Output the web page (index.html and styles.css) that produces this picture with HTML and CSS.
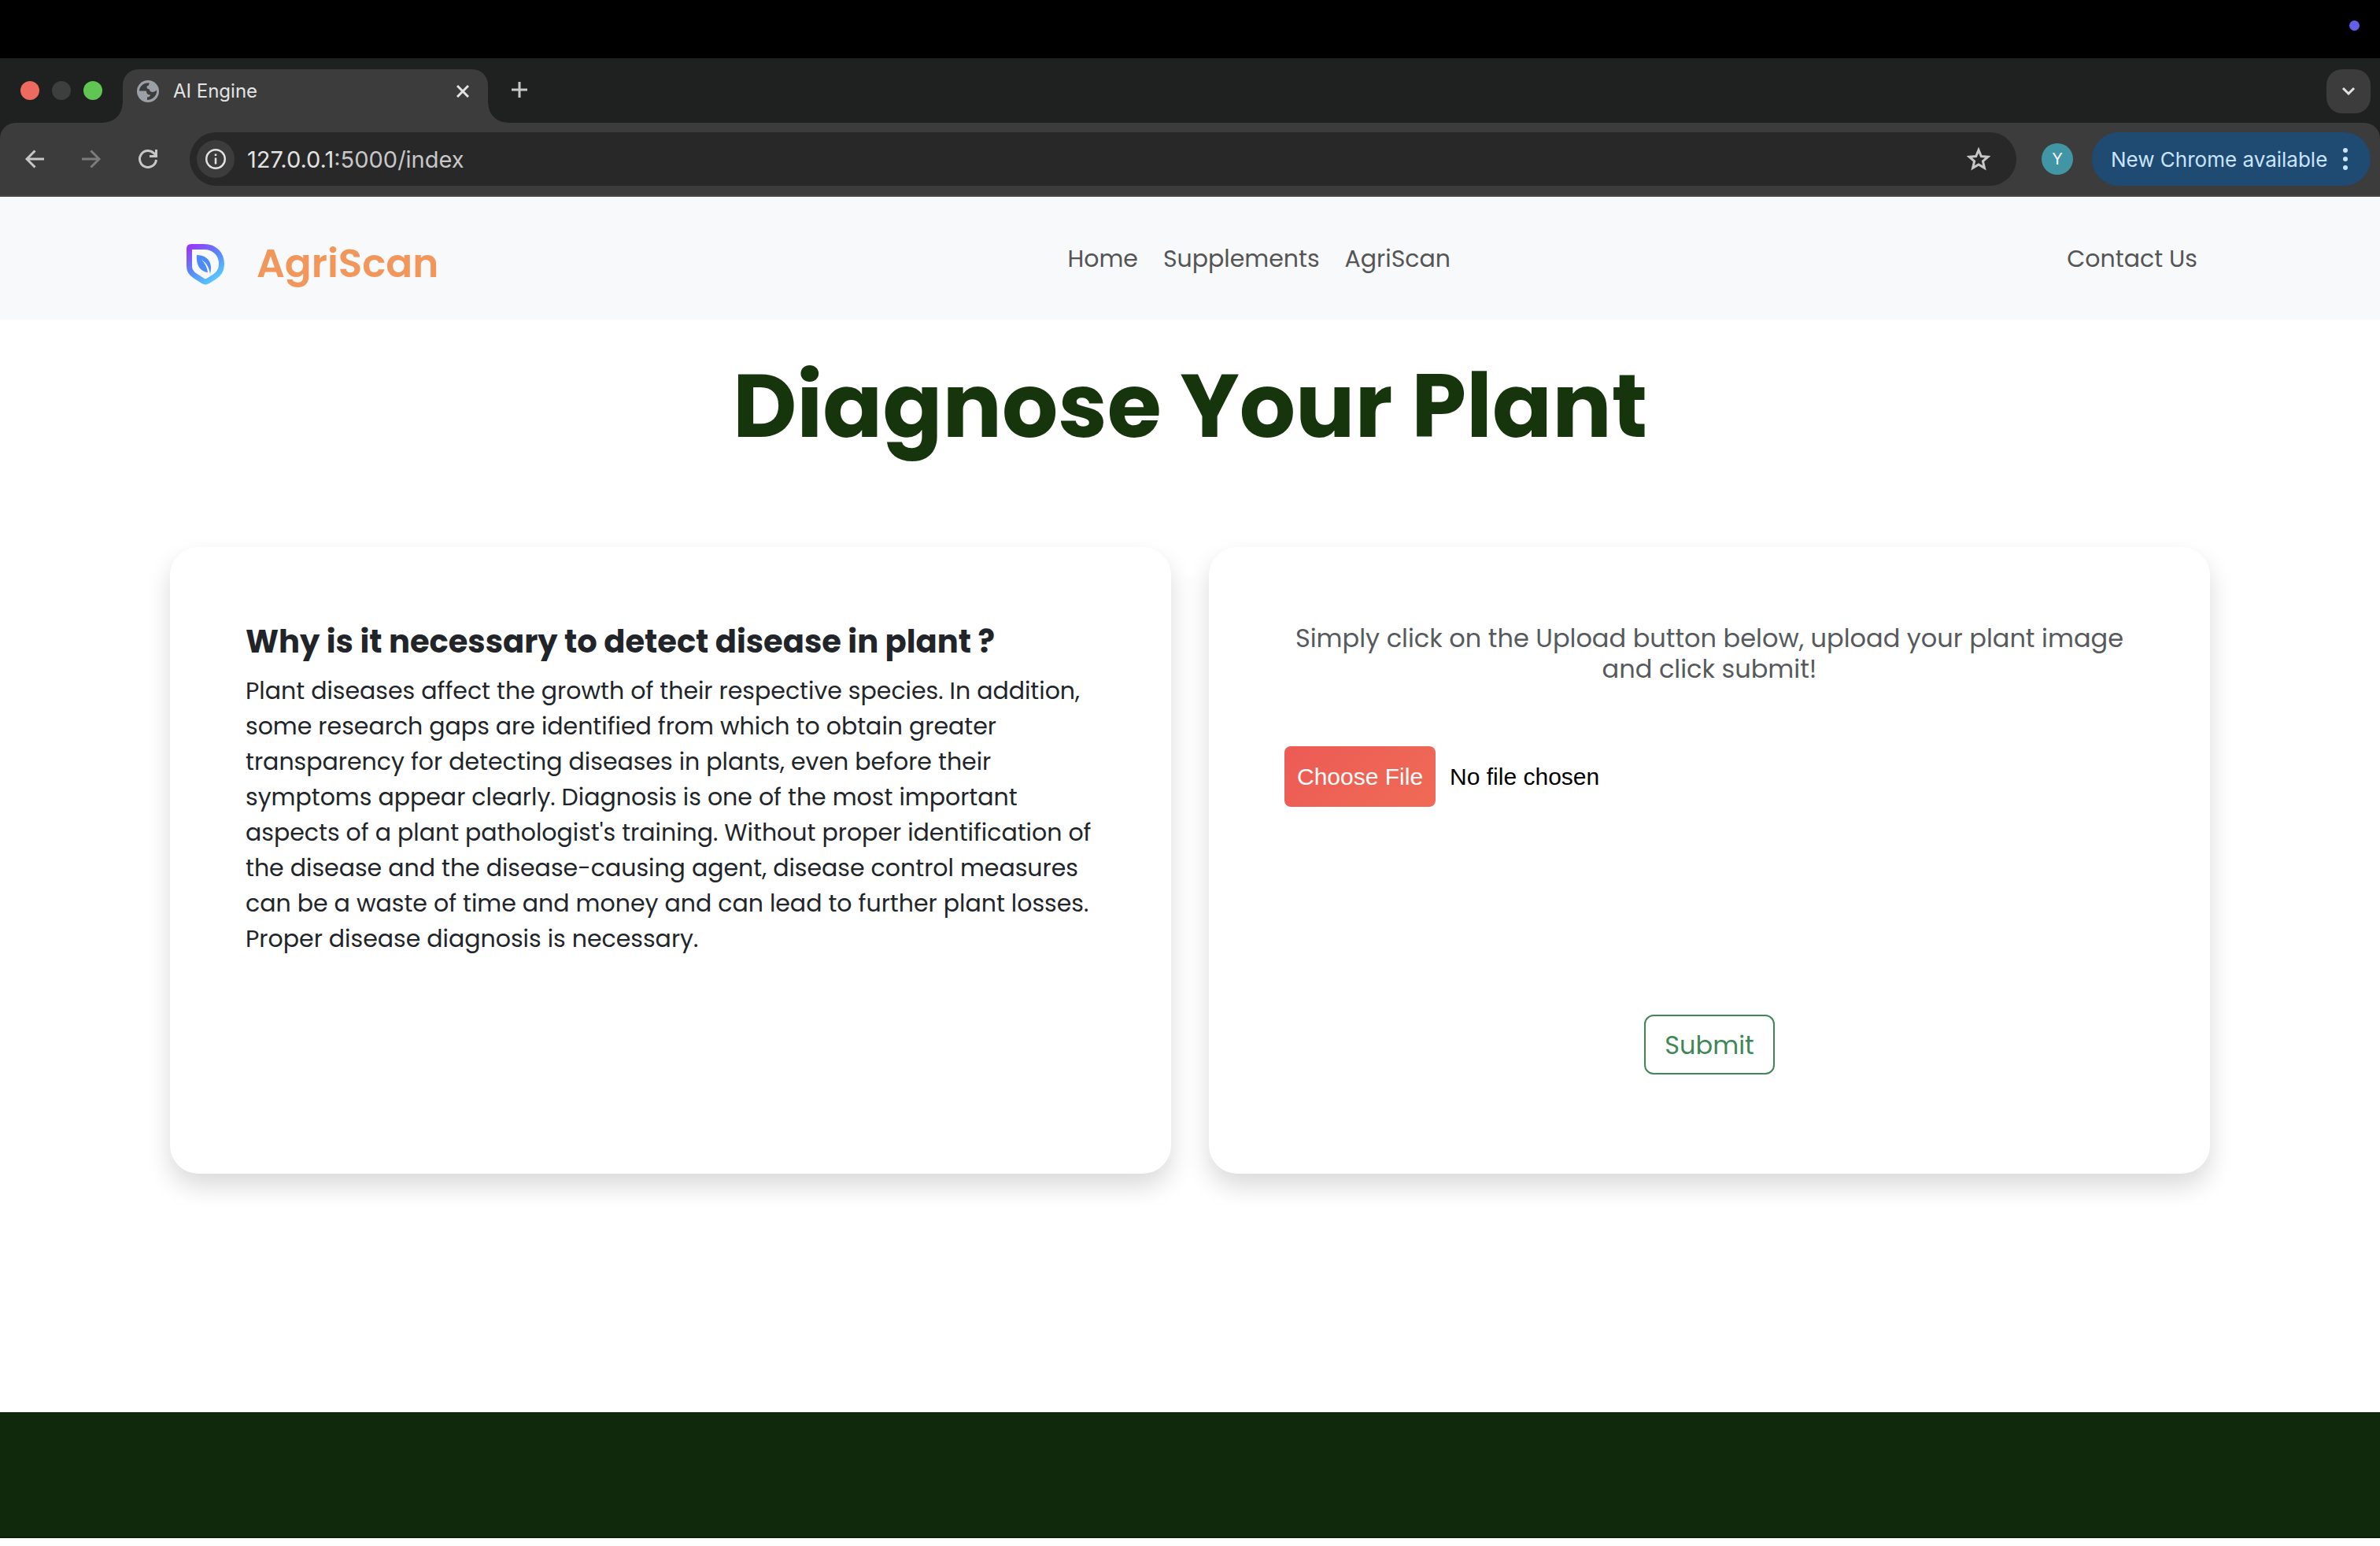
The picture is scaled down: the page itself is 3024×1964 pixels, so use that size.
FILE: index.html
```html
<!DOCTYPE html>
<html lang="en">
<head>
<meta charset="utf-8">
<meta name="viewport" content="width=device-width, initial-scale=1">
<title>AI Engine</title>
<link rel="stylesheet" href="styles.css">
</head>
<body>
<div class="menubar"><span class="camera-dot"></span></div>
<header class="browser">
  <div class="tabstrip">
    <div class="lights"><span class="light red"></span><span class="light gray"></span><span class="light green"></span></div>
    <div class="tab">
      <svg class="globe" viewBox="0 0 28 28" aria-hidden="true"><circle cx="14" cy="14" r="14" fill="#9aa0a6"/><path d="M3 13.500C3 8 8 3 15.500 3.200 15.500 6 15 7 12.500 7.500 12.500 10 13 11 16 11.500 17 14 14 15 11 13.500zM25 12.500C26 19 20 25 13 25V21.500C15 21.500 17 20.500 17 18.500 14 18.500 12 17 12 14L16 12.500C17 15.500 22 16 25 12.500z" fill="#3c3c3c"/></svg>
      <span class="tab-title">AI Engine</span>
      <button class="icon-button" aria-label="Close tab"><svg width="16" height="16" viewBox="0 0 16 16"><path d="M1 1l14 14M15 1L1 15" stroke="#e3e3e3" stroke-width="3"/></svg></button>
    </div>
    <button class="icon-button new-tab" aria-label="New tab"><svg width="20" height="20" viewBox="0 0 20 20"><path d="M10 0v20M0 10h20" stroke="#c7c7c7" stroke-width="3"/></svg></button>
    <button class="icon-button tab-search" aria-label="Search tabs"><svg width="18" height="12" viewBox="0 0 18 12"><path d="M2 2l7 7 7-7" fill="none" stroke="#e3e3e3" stroke-width="3"/></svg></button>
  </div>
  <div class="toolbar">
    <div class="history">
      <button class="icon-button" aria-label="Back"><svg width="24" height="24" viewBox="0 0 24 24"><path d="M24 12H2M12.500 1.500L2 12l10.500 10.500" fill="none" stroke="#c7c7c7" stroke-width="3"/></svg></button>
      <button class="icon-button" aria-label="Forward"><svg width="24" height="24" viewBox="0 0 24 24"><path d="M0 12h22M11.500 1.500L22 12 11.500 22.500" fill="none" stroke="#7c7c7c" stroke-width="3"/></svg></button>
      <button class="icon-button" aria-label="Reload"><svg width="24" height="24" viewBox="0 0 24 24"><path d="M22.500 13A10.500 10.500 0 1 1 19.500 4.600L22 7.500" fill="none" stroke="#c7c7c7" stroke-width="3"/><path d="M24 0v10H14V7h7V0z" fill="#c7c7c7"/></svg></button>
    </div>
    <div class="omnibox">
      <button class="icon-button site-info" aria-label="Site information"><svg width="26" height="26" viewBox="0 0 26 26"><circle cx="13" cy="13" r="11.800" fill="none" stroke="#e3e3e3" stroke-width="2.400"/><path d="M13 11.500v8M13 6.500v2.600" stroke="#e3e3e3" stroke-width="2.500"/></svg></button>
      <span class="url"><b>127.0.0.1</b>:5000/index</span>
      <button class="icon-button" aria-label="Bookmark"><svg width="30" height="30" viewBox="0 0 30 30"><path d="M15 3.500l3.300 8 8.700.700-6.600 5.700 2 8.500L15 21.900l-7.400 4.500 2-8.500L3 12.200l8.700-.700z" fill="none" stroke="#c7c7c7" stroke-width="3"/></svg></button>
    </div>
    <button class="avatar">Y</button>
    <button class="update">New Chrome available<svg width="6" height="28" viewBox="0 0 6 28"><g fill="#c8e4ff"><circle cx="3" cy="3" r="3"/><circle cx="3" cy="14" r="3"/><circle cx="3" cy="25" r="3"/></g></svg></button>
  </div>
</header>
<nav class="navbar">
  <a class="brand" href="#">
    <svg width="48" height="52" viewBox="0 0 48 52" aria-hidden="true"><defs><linearGradient id="leaf" x1="0" y1="0" x2=".65" y2="1"><stop offset="0" stop-color="#9b38fb"/><stop offset=".5" stop-color="#5a82f8"/><stop offset="1" stop-color="#57c4fd"/></linearGradient></defs><path d="M6 3.500H22C36 3.500 44.500 13 44.500 25.500 44.500 34 41 38.500 35 42L27 47c-2 1.200-4 1.200-6 0L11 40.500C6 37.500 3.500 33 3.500 28V6Q3.500 3.500 6 3.500z" fill="none" stroke="url(#leaf)" stroke-width="7"/><path d="M13 14C23 14 31 20 31 30 31 33 30.500 36 30 38 29 31 26 24 19 20 24 25 26 30 27 36 17 35 12 26 13 14z" fill="#4a8bf7"/></svg>
    <span>AgriScan</span>
  </a>
  <div class="links"><a href="#">Home</a><a href="#">Supplements</a><a href="#">AgriScan</a></div>
  <a class="contact" href="#">Contact Us</a>
</nav>
<main>
  <h1>Diagnose Your Plant</h1>
  <div class="cards">
    <section class="card">
      <h2>Why is it necessary to detect disease in plant ?</h2>
      <p class="why">Plant diseases affect the growth of their respective species. In addition,<br>some research gaps are identified from which to obtain greater<br>transparency for detecting diseases in plants, even before their<br>symptoms appear clearly. Diagnosis is one of the most important<br>aspects of a plant pathologist's training. Without proper identification of<br>the disease and the disease-causing agent, disease control measures<br>can be a waste of time and money and can lead to further plant losses.<br>Proper disease diagnosis is necessary.</p>
    </section>
    <form class="card upload">
      <label for="plant-image">Simply click on the Upload button below, upload your plant image<br>and click submit!</label>
      <input id="plant-image" type="file">
      <button type="button" class="submit">Submit</button>
    </form>
  </div>
</main>
<footer></footer>
</body>
</html>
```
FILE: styles.css
```css
* { box-sizing: border-box; }
body { margin: 0; min-height: 100vh; background: #fff; color: #212529; font-family: Poppins, Inter, sans-serif; font-size: 30px; line-height: 45px; }
h1, h2, p { margin: 0; }
a { color: inherit; text-decoration: none; }
button { font: inherit; cursor: pointer; }

.menubar { display: flex; justify-content: flex-end; height: 74px; padding: 26px; background: #000; }
.camera-dot { width: 13px; height: 13px; border-radius: 50%; background: #6460e8; }

.browser { background: #1f2120; color: #e3e3e3; font-family: Inter, sans-serif; }
.icon-button { display: flex; align-items: center; justify-content: center; padding: 0; border: 0; background: none; }
.tabstrip { display: flex; height: 82px; padding: 14px 12px 0 26px; }
.lights { display: flex; gap: 16px; width: 130px; padding-top: 15px; }
.light { width: 24px; height: 24px; border-radius: 50%; }
.red { background: #ed6a5e; }
.gray { background: #3d3e3e; }
.green { background: #61c554; }
.tab { position: relative; display: flex; align-items: center; width: 464px; height: 68px; padding: 0 24px 12px 18px; border-radius: 20px 20px 0 0; background: #3c3c3c; }
.tab::before, .tab::after { content: ""; position: absolute; bottom: 0; width: 24px; height: 24px; }
.tab::before { right: 100%; background: radial-gradient(circle at 0 0, transparent 23px, #3c3c3c 24px); }
.tab::after { left: 100%; background: radial-gradient(circle at 100% 0, transparent 23px, #3c3c3c 24px); }
.globe { width: 28px; height: 28px; margin-right: 18px; }
.tab-title { flex: 1; font-size: 24px; line-height: 32px; }
.new-tab { width: 80px; height: 52px; }
.tab-search { width: 56px; height: 56px; margin-left: auto; border-radius: 20px; background: #3c3c3c; }
.toolbar { display: flex; align-items: center; height: 94px; padding: 0 12px 0 32px; border-radius: 20px 20px 0 0; border-bottom: 2px solid #474747; background: #3c3c3c; }
.history { display: flex; gap: 48px; width: 209px; }
.omnibox { display: flex; flex: 1; align-items: center; height: 68px; padding: 0 33px 0 9px; border-radius: 34px; background: #282828; }
.site-info { width: 48px; height: 48px; margin-right: 16px; border-radius: 50%; background: #3c3c3c; }
.url { flex: 1; color: #c7c7c7; font-size: 29px; }
.url b { color: #e3e3e3; font-weight: 400; }
.avatar { width: 40px; height: 40px; margin: 0 24px 0 32px; padding: 0; border: 0; border-radius: 50%; background: #4295a5; color: #fff; font-size: 20px; line-height: 40px; }
.update { display: flex; align-items: center; justify-content: space-between; width: 354px; height: 68px; padding: 0 29px 0 24px; border: 0; border-radius: 34px; background: #1f4a72; color: #c8e4ff; font-size: 26px; white-space: nowrap; }

.navbar { display: flex; justify-content: space-between; min-height: 156px; padding: 56px 232px 0; background: #f8f9fb; color: #555; }
.brand { display: flex; gap: 41px; padding: 0 16px 0 5px; color: #f1975b; font-size: 50px; font-weight: 600; line-height: 58px; }
.brand svg { margin-top: 4px; }
.links { display: flex; gap: 32px; }
main { min-height: 1388px; padding: 43px 216px 0; }
h1 { color: #17350d; font-size: 112px; font-weight: 700; line-height: 134px; text-align: center; }
.cards { display: grid; grid-template-columns: 1fr 1fr; gap: 48px; margin-top: 112px; }
.card { min-height: 796px; padding: 96px; border-radius: 36px; background: #fff; box-shadow: 0 16px 32px rgba(0, 0, 0, .15); white-space: nowrap; }
h2 { margin-bottom: 16px; font-size: 40px; font-weight: 700; line-height: 48px; }
.upload { display: flex; flex-direction: column; align-items: center; }
.upload label { color: #565a5d; font-size: 32px; line-height: 39px; text-align: center; }
input[type="file"] { width: 100%; margin-top: 79px; color: #000; font: 30px/45px "Liberation Sans", sans-serif; }
input::file-selector-button { height: 77px; margin: 0 18px 0 0; padding: 0 16px; border: 0; border-radius: 8px; background: linear-gradient(135deg, #ec5b55, #ef6b56); color: #fff; font: inherit; }
.submit { height: 76px; margin-top: 264px; padding: 0 24px; border: 2px solid #3f8758; border-radius: 12px; background: #fff; color: #3f8758; font-size: 32px; }
footer { height: 160px; border-bottom: 2px solid #0b2009; background: #10280c; }
```
